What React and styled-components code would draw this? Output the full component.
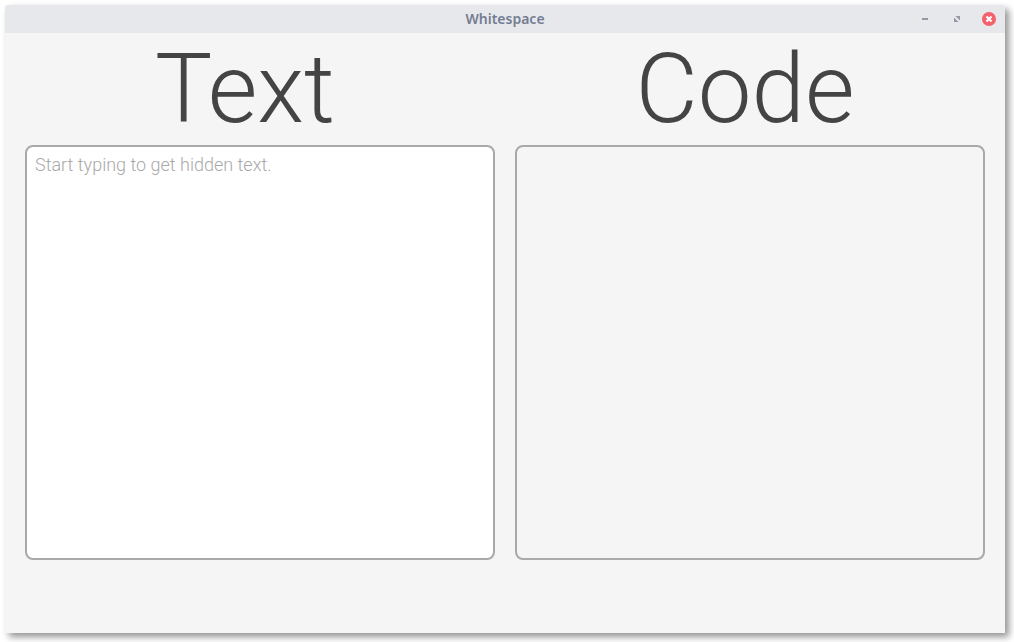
import React from "react";
import styled, { createGlobalStyle } from "styled-components";

const GlobalStyle = createGlobalStyle`
  * { box-sizing: border-box; }
  body { margin: 0; background: #fff; font-family: Roboto, "Liberation Sans", sans-serif; }
`;

const Desktop = styled.div`
  min-height: 100vh;
  display: flex;
  padding: 5px 9px 9px 5px;
`;

const Window = styled.div`
  flex: 1;
  display: flex;
  flex-direction: column;
  background: #f5f5f5;
  border-radius: 3px 3px 0 0;
  box-shadow: 4px 4px 7px rgba(0, 0, 0, 0.42);
`;

const TitleBar = styled.header`
  height: 28px;
  display: grid;
  grid-template-columns: 1fr auto 1fr;
  align-items: center;
  padding: 0 8px;
  background: #e7e8eb;
  border-radius: 3px 3px 0 0;
`;

const WindowTitle = styled.span`
  grid-column: 2;
  font: 600 14px/20px "Noto Sans", sans-serif;
  color: #747d93;
`;

const Controls = styled.div`
  display: flex;
  justify-content: flex-end;
  gap: 16px;
`;

const ControlButton = styled.button`
  width: 16px;
  height: 16px;
  padding: 0;
  border: 0;
  background: transparent;

  svg { display: block; }
`;

const Headings = styled.div`
  display: grid;
  grid-template-columns: 1fr 1fr;
  gap: 20px;
  padding-right: 20px;
`;

const Heading = styled.label`
  font-size: 96px;
  font-weight: 300;
  line-height: 112px;
  text-align: center;
  color: #444;
`;

const Editors = styled.main`
  display: grid;
  grid-template-columns: 1fr 1fr;
  gap: 20px;
  padding: 0 20px;
`;

const Editor = styled.textarea`
  height: 415px;
  padding: 7px 8px;
  border: 2px solid #a9a9a9;
  border-radius: 8px;
  background: ${(p) => (p.readOnly ? "#f5f5f5" : "#fff")};
  font: 300 18px/21px Roboto, sans-serif;
  color: #444;
  resize: none;
  outline: none;

  &::placeholder { color: #a9a9a9; opacity: 1; }
`;

export default function App() {
  return (
    <>
      <GlobalStyle />
      <Desktop>
        <Window>
          <TitleBar>
            <WindowTitle>Whitespace</WindowTitle>
            <Controls>
              <ControlButton aria-label="Minimize">
                <svg width="16" height="16"><path d="M5 7h6v2H5z" fill="#9498a5" /></svg>
              </ControlButton>
              <ControlButton aria-label="Maximize">
                <svg width="16" height="16"><path d="M6.5 5H11v4.5zM5 6.5V11h4.5z" fill="#9498a5" /></svg>
              </ControlButton>
              <ControlButton aria-label="Close">
                <svg width="16" height="16">
                  <circle cx="8" cy="8" r="7" fill="#f4616a" />
                  <path d="M5.5 5.5l5 5m0-5l-5 5" stroke="#fff" strokeWidth="2.2" />
                </svg>
              </ControlButton>
            </Controls>
          </TitleBar>
          <Headings>
            <Heading htmlFor="text">Text</Heading>
            <Heading htmlFor="code">Code</Heading>
          </Headings>
          <Editors>
            <Editor id="text" placeholder="Start typing to get hidden text." />
            <Editor id="code" readOnly />
          </Editors>
        </Window>
      </Desktop>
    </>
  );
}
